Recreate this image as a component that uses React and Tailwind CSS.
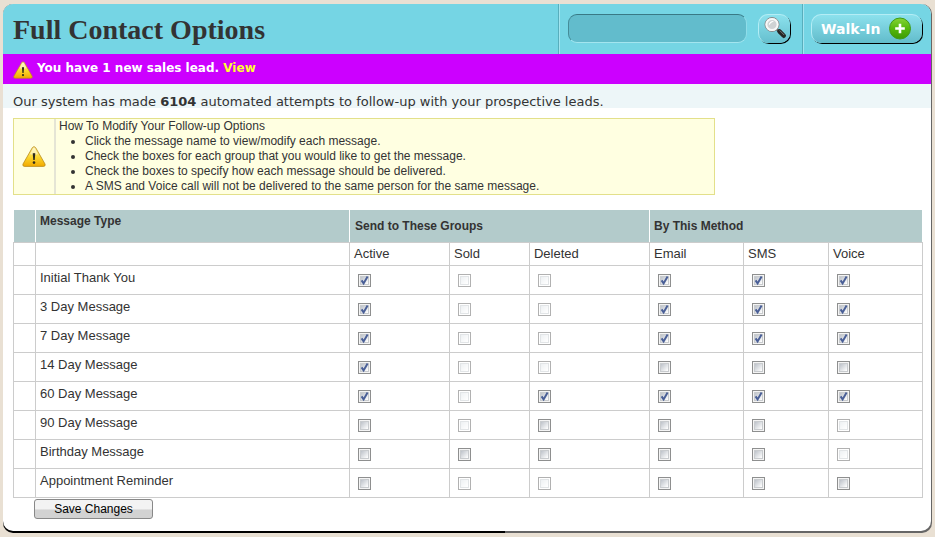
import React from 'react';

const groups = ['Active', 'Sold', 'Deleted'];
const methods = ['Email', 'SMS', 'Voice'];
const columns = [...groups, ...methods];

// x = checked, o = unchecked, - = not available
const messages = [
  { name: 'Initial Thank You', boxes: 'x--xxx' },
  { name: '3 Day Message', boxes: 'x--xxx' },
  { name: '7 Day Message', boxes: 'x--xxx' },
  { name: '14 Day Message', boxes: 'x--ooo' },
  { name: '60 Day Message', boxes: 'x-xxxx' },
  { name: '90 Day Message', boxes: 'o-ooo-' },
  { name: 'Birthday Message', boxes: 'ooooo-' },
  { name: 'Appointment Reminder', boxes: 'o--ooo' },
];

const tips = [
  'Click the message name to view/modify each message.',
  'Check the boxes for each group that you would like to get the message.',
  'Check the boxes to specify how each message should be delivered.',
  'A SMS and Voice call will not be delivered to the same person for the same message.',
];

const WarningIcon = ({ className, id }) => (
  <svg className={className} viewBox="0 0 24 21" aria-hidden="true">
    <defs>
      <linearGradient id={id} x1="0" y1="0" x2="0" y2="1">
        <stop offset="0" stopColor="#fff3a8" />
        <stop offset="0.55" stopColor="#fbd52c" />
        <stop offset="1" stopColor="#f2a900" />
      </linearGradient>
    </defs>
    <path d="M10.4 1.6Q12 -.4 13.6 1.6L23 18Q23.8 20.2 21.6 20.4H2.4Q.2 20.2 1 18Z" fill={`url(#${id})`} stroke="#b98a1c" strokeWidth="0.8" />
    <path d="M11.2 2.4Q12 1.3 12.8 2.4L16 8Q12 10 8 8Z" fill="#fff" opacity="0.45" />
    <path d="M10.7 7.4Q12 6.4 13.3 7.4L12.7 14H11.3Z" fill="#2d2a1c" />
    <circle cx="12" cy="16.6" r="1.3" fill="#2d2a1c" />
  </svg>
);

const SearchIcon = () => (
  <svg className="h-6 w-6" viewBox="0 0 24 24" aria-hidden="true">
    <path d="M13.5 13L16 15.5" stroke="#666" strokeWidth="2.4" />
    <path d="M16.4 15.4L20.8 19.8" stroke="#262626" strokeWidth="4.4" strokeLinecap="round" />
    <path d="M17 14.8L21 18.8" stroke="#777" strokeWidth="1" strokeLinecap="round" />
    <circle cx="9" cy="8.5" r="7" fill="#cfd2d4" stroke="#85888a" strokeWidth="1" />
    <circle cx="9" cy="8.5" r="5.6" fill="none" stroke="#f8f8f8" strokeWidth="2" />
    <path d="M5.8 9.5A4 4 0 0 1 11 5.2Q7.5 6.5 5.8 9.5Z" fill="#fff" />
  </svg>
);

const PlusIcon = () => (
  <svg className="h-6 w-6" viewBox="0 0 24 24" aria-hidden="true">
    <defs>
      <linearGradient id="plus" x1="0" y1="0" x2="0" y2="1">
        <stop offset="0" stopColor="#86d435" />
        <stop offset="0.5" stopColor="#55b80c" />
        <stop offset="1" stopColor="#3d9a04" />
      </linearGradient>
    </defs>
    <circle cx="12" cy="11.5" r="10.5" fill="url(#plus)" stroke="#3f9b16" strokeWidth="1" />
    <path d="M12 6.7V16.3M7.2 11.5H16.8" stroke="#fff" strokeWidth="2.6" />
  </svg>
);

const Checkbox = ({ state, label }) => (
  <span className="grid h-[13px] w-[13px]">
    <input
      type="checkbox"
      aria-label={label}
      defaultChecked={state === 'x'}
      disabled={state === '-'}
      className="peer col-start-1 row-start-1 h-[13px] w-[13px] appearance-none border border-[#8e8f8f] bg-linear-to-br from-[#bfc4cb] from-20% to-white to-80% shadow-[inset_0_0_0_1px_#f4f4f4,inset_0_0_0_2px_#c8cbce] disabled:border-[#b1b1b1] disabled:from-[#eef1f3] disabled:to-white disabled:shadow-[inset_0_0_0_1px_#fff,inset_0_0_0_2px_#e2e5e7]"
    />
    <svg className="pointer-events-none invisible col-start-1 row-start-1 h-[13px] w-[13px] peer-checked:visible" viewBox="0 0 13 13" aria-hidden="true">
      <path d="M3.6 6.4L5.6 9.4L9.6 2.6" fill="none" stroke="#4a5f97" strokeWidth="2" />
    </svg>
  </span>
);

const Header = () => (
  <header className="flex h-[50px] bg-[#75d5e4]">
    <h1 className="flex-1 pt-2 pl-[10px] font-['Liberation_Serif',serif] text-[28px] leading-9 font-bold whitespace-nowrap text-[#333]">
      Full Contact Options
    </h1>
    <form className="flex items-start gap-[11px] border-l border-[#58aebc] pt-[10px] pr-3 pl-[9px] shadow-[inset_1px_0_0_#a3e5ef]" onSubmit={(e) => e.preventDefault()}>
      <input
        type="text"
        aria-label="Search"
        className="h-[29px] w-[179px] rounded-[9px] border border-t-[#397985] border-r-[#8fdde9] border-b-[#a3e5ef] border-l-[#458c98] bg-[#62bccc] px-2 text-sm outline-none"
      />
      <button
        type="submit"
        aria-label="Search"
        className="flex h-[29px] w-8 justify-center rounded-[10px] border-t border-l border-[#b4edf5] bg-linear-to-b from-[#8ce1ed] to-[#65bfce] pt-px shadow-[1px_1px_0_#000]"
      >
        <SearchIcon />
      </button>
    </form>
    <div className="border-l border-[#58aebc] pt-[10px] pr-[9px] pl-2 shadow-[inset_1px_0_0_#a3e5ef]">
      <button
        type="button"
        className="flex h-[29px] w-[111px] items-center gap-[7px] rounded-[10px] border-t border-l border-[#b4edf5] bg-linear-to-b from-[#8ce1ed] to-[#62bccb] pl-[9px] text-[14px] font-bold whitespace-nowrap text-white shadow-[1px_1px_0_#000]"
      >
        Walk-In
        <PlusIcon />
      </button>
    </div>
  </header>
);

const Tips = () => (
  <section className="mx-[10px] mt-[10px] flex max-w-[702px] border border-[#e3e08a] bg-[#ffffe1] font-['Liberation_Sans',sans-serif] text-[12px] leading-[15px]">
    <div className="flex w-[42px] items-center justify-center border-r-2 border-[#e5e5d5]">
      <WarningIcon id="warn-tips" className="h-[21px] w-6" />
    </div>
    <div className="pl-[3px]">
      <p>How To Modify Your Follow-up Options</p>
      <ul className="list-disc pl-[26px]">
        {tips.map((tip) => (
          <li key={tip}>{tip}</li>
        ))}
      </ul>
    </div>
  </section>
);

const OptionsTable = () => (
  <table className="w-full table-fixed border-collapse text-left text-[13px] leading-4">
    <colgroup>
      <col className="w-[22px]" />
      <col />
      <col className="w-[100px]" />
      <col className="w-[80px]" />
      <col className="w-[120px]" />
      <col className="w-[94px]" />
      <col className="w-[85px]" />
      <col className="w-[94px]" />
    </colgroup>
    <thead>
      <tr className="h-8 bg-[#b3cbcb] text-[12px]">
        <th className="border border-t-0 border-white border-b-[#ccc]"></th>
        <th className="border border-t-0 border-white border-b-[#ccc] px-1 pt-[3px] align-top">Message Type</th>
        <th colSpan={3} className="border border-t-0 border-white border-b-[#ccc] px-[5px]">Send to These Groups</th>
        <th colSpan={3} className="border border-t-0 border-white border-b-[#ccc] px-1">By This Method</th>
      </tr>
      <tr className="h-[23px]">
        <td className="border border-[#ccc]"></td>
        <td className="border border-[#ccc]"></td>
        {columns.map((col) => (
          <th key={col} className="border border-[#ccc] px-1 font-normal">{col}</th>
        ))}
      </tr>
    </thead>
    <tbody>
      {messages.map((message) => (
        <tr key={message.name} className="h-[29px]">
          <td className="border border-[#ccc]"></td>
          <td className="border border-[#ccc] px-1 pt-1 align-top">{message.name}</td>
          {columns.map((col, i) => (
            <td key={col} className="border border-[#ccc] pt-[2px] pl-2">
              <Checkbox state={message.boxes[i]} label={`${message.name} - ${col}`} />
            </td>
          ))}
        </tr>
      ))}
    </tbody>
  </table>
);

const App = () => {
  return (
    <div className="min-h-screen bg-[#e9e0d3] px-[3px] pt-1 pb-1 font-['DejaVu_Sans',sans-serif] text-[#333]">
      <div className="rounded-[10px] bg-linear-to-r from-black from-54% to-[#666] to-54% pr-px pb-[2px]">
        <main className="overflow-hidden rounded-[10px] bg-white pb-3">
          <Header />
          <div className="flex h-[30px] items-start gap-1 bg-[#cc00ff] pt-[5px] pl-[10px] text-[12px] leading-[18px] font-bold text-white">
            <WarningIcon id="warn-lead" className="mt-[2px] h-[18px] w-5" />
            <p>
              You have 1 new sales lead. <a href="#view" className="text-[#ffff33]">View</a>
            </p>
          </div>
          <p className="h-6 bg-[#edf6f8] pt-[9px] pl-[10px] text-[13px] leading-[18px]">
            Our system has made <b>6104</b> automated attempts to follow-up with your prospective leads.
          </p>
          <Tips />
          <form className="mt-[15px] mr-2 ml-[10px] font-['Liberation_Sans',sans-serif]" onSubmit={(e) => e.preventDefault()}>
            <OptionsTable />
            <button
              type="submit"
              className="mt-px ml-[21px] block h-5 w-[119px] rounded-[3px] border border-[#888] bg-linear-to-b from-[#f3f3f3] from-50% to-[#d2d2d2] to-55% text-[12px] leading-4 text-black"
            >
              Save Changes
            </button>
          </form>
        </main>
      </div>
    </div>
  );
};

export default App;
